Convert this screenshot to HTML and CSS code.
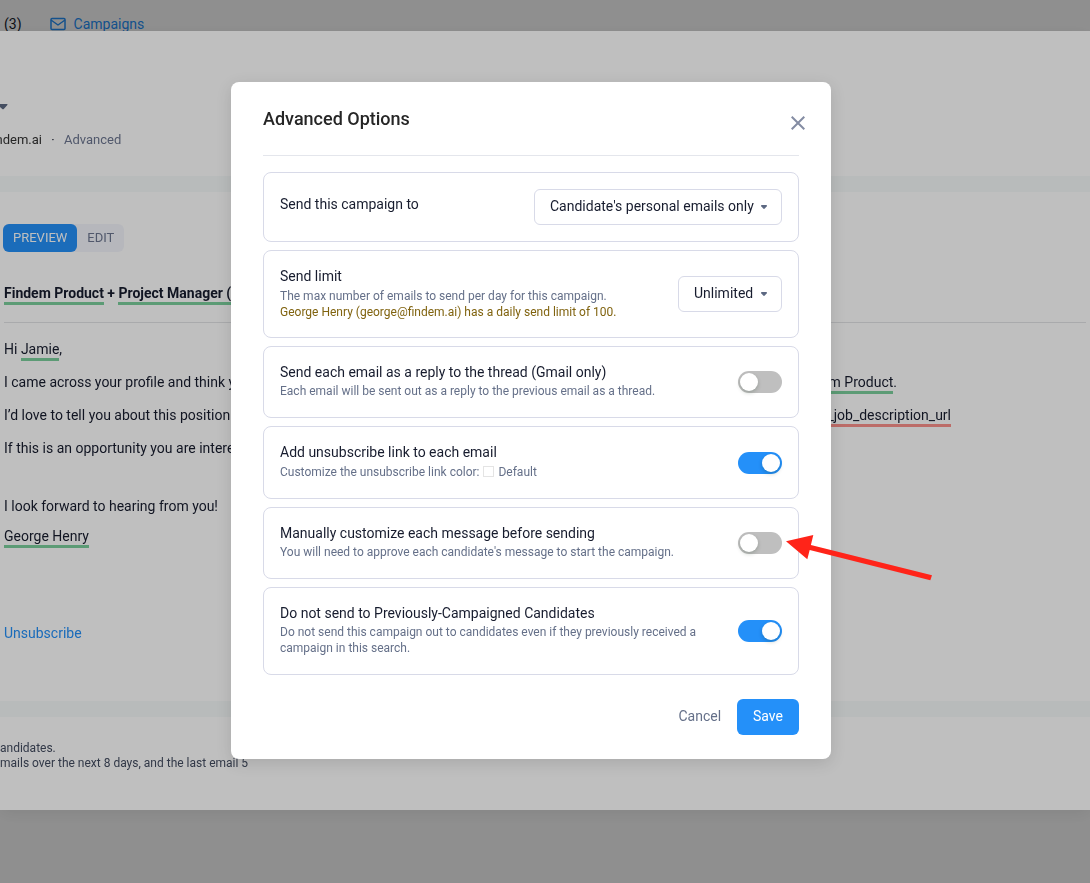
FILE: index.html
```html
<!DOCTYPE html>
<html lang="en">
<head>
    <meta charset="UTF-8">
    <meta name="viewport" content="width=device-width, initial-scale=1.0">
    <title>Advanced Options</title>
    <link rel="stylesheet" href="styles.css">
</head>
<body>
    <nav class="tabs">
        <span class="tab-count">(3)</span>
        <a class="tab" href="#campaigns">
            <svg width="16" height="14" viewBox="0 0 16 14" fill="none" stroke="currentColor" stroke-width="1.5" stroke-linejoin="round">
                <rect x="1" y="1.5" width="14" height="11" rx="1"/>
                <path d="M1 3l7 5 7-5"/>
            </svg>
            Campaigns
        </a>
    </nav>

    <!-- Campaign drawer -->
    <div class="drawer-overlay">
        <main class="drawer">
            <header class="drawer-header">
                <svg class="header-caret" width="8" height="6" viewBox="0 0 8 6"><path d="M0 0h7q1 .3.4 1L4 4.800Q3 5.800 2 4.800L0 3z" fill="#5c6882"/></svg>
                <div class="sender">
                    <span class="sender-email">ndem.ai</span>
                    <span class="dot">·</span>
                    <a class="advanced" href="#advanced">Advanced</a>
                </div>
            </header>

            <section class="message">
                <div class="mode">
                    <button class="mode-btn active" type="button">PREVIEW</button>
                    <button class="mode-btn" type="button">EDIT</button>
                </div>
                <h2 class="subject"><span class="var">Findem Product</span> + <span class="var">Project Manager (Remote)</span></h2>
                <div class="message-body">
                    <p>Hi <span class="var">Jamie</span>,</p>
                    <p class="line line-role">
                        <span>I came across your profile and think you</span>
                        <span><span class="var">Findem Product</span>.</span>
                    </p>
                    <p class="line line-link">
                        <span>I’d love to tell you about this position</span>
                        <span><span class="var missing">findem_job_description_url</span></span>
                    </p>
                    <p>If this is an opportunity you are interested in</p>
                    <div class="closing">
                        <p>I look forward to hearing from you!</p>
                        <p><span class="var">George Henry</span></p>
                    </div>
                    <a class="unsubscribe" href="#unsubscribe">Unsubscribe</a>
                </div>
            </section>

            <footer class="summary">
                <p>andidates.</p>
                <p>mails over the next 8 days, and the last email 5</p>
            </footer>
        </main>
    </div>

    <!-- Advanced options modal -->
    <div class="modal-overlay">
        <div class="modal" role="dialog" aria-labelledby="modal-title">
            <div class="modal-header">
                <h1 id="modal-title">Advanced Options</h1>
                <button class="close-btn" type="button" aria-label="Close">
                    <svg width="14" height="14" viewBox="0 0 14 14" fill="none" stroke="#848ca3" stroke-width="2"><path d="M.7.7l12.600 12.600M13.300.7L.7 13.300"/></svg>
                </button>
            </div>

            <form class="options">
                <div class="option">
                    <div class="option-text single">
                        <label class="option-title" for="send-to">Send this campaign to</label>
                    </div>
                    <div class="select">
                        <select id="send-to">
                            <option>Candidate's personal emails only</option>
                        </select>
                        <svg class="caret" width="6" height="5" viewBox="0 0 6 5"><path d="M.6 0h4.800q.8.400.4 1.200L3.800 3.600Q3 4.400 2.200 3.600L.2 1.200Q-.2.400.6 0z" fill="#5c6882"/></svg>
                    </div>
                </div>

                <div class="option">
                    <div class="option-text with-note">
                        <label class="option-title" for="send-limit">Send limit</label>
                        <p class="hint">The max number of emails to send per day for this campaign.</p>
                        <p class="hint note">George Henry (george@findem.ai) has a daily send limit of 100.</p>
                    </div>
                    <div class="select">
                        <select id="send-limit">
                            <option>Unlimited</option>
                        </select>
                        <svg class="caret" width="6" height="5" viewBox="0 0 6 5"><path d="M.6 0h4.800q.8.400.4 1.200L3.800 3.600Q3 4.400 2.200 3.600L.2 1.200Q-.2.400.6 0z" fill="#5c6882"/></svg>
                    </div>
                </div>

                <div class="option">
                    <div class="option-text">
                        <label class="option-title" for="reply">Send each email as a reply to the thread (Gmail only)</label>
                        <p class="hint">Each email will be sent out as a reply to the previous email as a thread.</p>
                    </div>
                    <input class="toggle" type="checkbox" id="reply">
                </div>

                <div class="option">
                    <div class="option-text">
                        <label class="option-title" for="unsub">Add unsubscribe link to each email</label>
                        <p class="hint color-hint">Customize the unsubscribe link color: <span class="swatch"></span> Default</p>
                    </div>
                    <input class="toggle" type="checkbox" id="unsub" checked>
                </div>

                <div class="option">
                    <div class="option-text">
                        <label class="option-title" for="manual">Manually customize each message before sending</label>
                        <p class="hint">You will need to approve each candidate's message to start the campaign.</p>
                    </div>
                    <input class="toggle" type="checkbox" id="manual">
                </div>

                <div class="option">
                    <div class="option-text">
                        <label class="option-title" for="previous">Do not send to Previously-Campaigned Candidates</label>
                        <p class="hint">Do not send this campaign out to candidates even if they previously received a campaign in this search.</p>
                    </div>
                    <input class="toggle" type="checkbox" id="previous" checked>
                </div>
            </form>

            <div class="modal-footer">
                <button class="btn" type="button">Cancel</button>
                <button class="btn primary" type="button">Save</button>
            </div>

            <svg class="arrow" width="146" height="46" viewBox="0 0 146 46" fill="#ff2419">
                <path d="M0 6.300L27.300 0l-2.400 10L146 40.300l-1.700 4.900L23.700 15l-2.400 9.300z"/>
            </svg>
        </div>
    </div>
</body>
</html>
```
FILE: styles.css
```css
* {
    box-sizing: border-box;
    margin: 0;
    padding: 0;
}

body {
    background-color: #fff;
    color: #171c2e;
    font-family: Roboto, 'Liberation Sans', sans-serif;
    font-size: 14px;
    line-height: 20px;
    min-height: 100vh;
    overflow: hidden;
}

button,
select {
    font: inherit;
}

a {
    color: #2490f9;
    text-decoration: none;
}

.tabs {
    display: flex;
    align-items: center;
    gap: 28px;
    padding: 14px 4px 0;
}

.tab {
    display: flex;
    align-items: center;
    gap: 8px;
}

/* Drawer */
.drawer-overlay {
    position: fixed;
    inset: 0;
    padding-top: 31px;
    background-color: rgba(0, 0, 0, 0.25);
    overflow: hidden;
}

.drawer {
    background-color: #f6fafa;
    box-shadow: 0 4px 16px rgba(0, 0, 0, 0.08);
}

.drawer-header {
    background-color: #fff;
    padding: 73px 0 26px;
}

.header-caret {
    display: block;
    margin-bottom: 20px;
}

.sender {
    display: flex;
    align-items: center;
    font-size: 13px;
}

.sender-email {
    display: flex;
    justify-content: flex-end;
    width: 42px;
    color: #333;
}

.dot {
    width: 22px;
    text-align: center;
}

.advanced {
    color: #6c7690;
}

.message {
    margin-top: 16px;
    padding: 32px 4px 58px;
    background-color: #fff;
}

.mode {
    display: flex;
    width: fit-content;
    margin-left: -1px;
    border-radius: 6px;
    background-color: #f3f5fb;
}

.mode-btn {
    height: 28px;
    padding: 0 10px;
    border: none;
    border-radius: 6px;
    background: none;
    color: #6c7690;
    font-size: 13px;
    cursor: pointer;
}

.mode-btn.active {
    background-color: #2490f9;
    color: #fff;
}

.subject {
    margin-top: 31px;
    padding-bottom: 19px;
    border-bottom: 1px solid #e2e3e6;
    font-size: 14px;
    font-weight: 700;
    white-space: nowrap;
}

.var {
    padding-bottom: 1px;
    border-bottom: 3px solid #7bcf9d;
}

.var.missing {
    border-color: #fb918b;
}

.message-body {
    display: flex;
    flex-direction: column;
    gap: 13px;
    padding-top: 16px;
}

.line {
    display: flex;
    justify-content: space-between;
}

.line-role {
    max-width: 893px;
}

.line-link {
    max-width: 947px;
}

.closing {
    display: flex;
    flex-direction: column;
    gap: 10px;
    margin: 25px 0 64px;
}

.unsubscribe {
    align-self: flex-start;
}

.summary {
    margin-top: 16px;
    padding: 24px 0 39px;
    background-color: #fff;
    color: #434c60;
    font-size: 12px;
    line-height: 15px;
}

/* Modal */
.modal-overlay {
    position: fixed;
    inset: 0;
    display: flex;
    justify-content: center;
    align-items: flex-start;
    padding: 82px 28px 0 0;
    background-color: rgba(0, 0, 0, 0.25);
}

.modal {
    position: relative;
    width: 100%;
    max-width: 600px;
    padding: 0 32px 24px;
    border-radius: 8px;
    background-color: #fff;
    box-shadow: 0 4px 16px rgba(0, 0, 0, 0.12);
}

.modal-header {
    display: flex;
    justify-content: space-between;
    align-items: flex-start;
    margin-bottom: 16px;
    padding: 25px 0 24px;
    border-bottom: 1px solid #e4e6ec;
}

h1 {
    color: #262626;
    font-size: 18px;
    font-weight: 500;
    line-height: 24px;
}

.close-btn {
    display: flex;
    margin: 9px -6px 0 0;
    border: none;
    background: none;
    cursor: pointer;
}

.options {
    display: flex;
    flex-direction: column;
    gap: 8px;
}

.option {
    display: flex;
    justify-content: space-between;
    align-items: center;
    gap: 24px;
    padding: 16px;
    border: 1px solid #d8dae8;
    border-radius: 8px;
}

.option-text {
    padding-bottom: 2px;
}

.option-text.single {
    padding-bottom: 4px;
}

.option-text.with-note {
    padding-bottom: 0;
}

.option-title {
    display: block;
    margin-bottom: 2px;
    line-height: 18px;
}

.with-note .option-title {
    margin-bottom: 3px;
}

.hint {
    color: #657089;
    font-size: 12px;
    line-height: 16px;
}

.hint.note {
    color: #80630f;
    line-height: 17px;
}

.color-hint {
    padding-top: 1px;
}

.swatch {
    display: inline-block;
    width: 11px;
    height: 11px;
    margin: 0 1px;
    border: 1px solid #e4e4e4;
    vertical-align: -1px;
}

.select {
    position: relative;
    flex-shrink: 0;
}

.select select {
    display: block;
    height: 36px;
    padding: 0 27px 2px 15px;
    appearance: none;
    border: 1px solid #d8dae8;
    border-radius: 6px;
    background-color: #fff;
    color: #171c2e;
    cursor: pointer;
}

.caret {
    position: absolute;
    top: 16px;
    right: 15px;
    pointer-events: none;
}

.toggle {
    display: flex;
    flex-shrink: 0;
    width: 44px;
    height: 22px;
    padding: 2px;
    appearance: none;
    border-radius: 11px;
    background-color: #bfbfbf;
    cursor: pointer;
}

.toggle::before {
    content: '';
    width: 18px;
    height: 18px;
    border-radius: 50%;
    background-color: #fff;
    box-shadow: 0 2px 4px rgba(0, 35, 11, 0.2);
}

.toggle:checked {
    justify-content: flex-end;
    background-color: #2490f9;
}

.modal-footer {
    display: flex;
    justify-content: flex-end;
    margin-top: 24px;
}

.btn {
    height: 36px;
    padding: 0 16px 2px;
    border: none;
    border-radius: 6px;
    background: none;
    color: #657089;
    cursor: pointer;
}

.btn.primary {
    background-color: #2490f9;
    color: #fff;
}

/* Callout pointing at the manual toggle */
.arrow {
    position: absolute;
    top: 453px;
    left: 555px;
}
```
